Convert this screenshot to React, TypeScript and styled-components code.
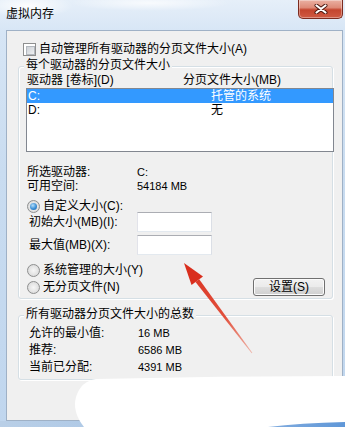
import React from "react";
import styled, { createGlobalStyle } from "styled-components";

const GlobalStyle = createGlobalStyle`
  html, body {
    margin: 0;
    padding: 0;
    background: #fff;
  }
  body {
    font-family: "Liberation Sans", "Noto Sans CJK SC", sans-serif;
    font-size: 12px;
    color: #000;
  }
  * {
    box-sizing: border-box;
  }
`;

const Window = styled.div`
  position: relative;
  width: 345px;
  height: 427px;
  overflow: hidden;
  display: flex;
  flex-direction: column;
  background:
    linear-gradient(90deg, #b9cfe7 0%, #a9c6e6 45%, #7eaade 80%, #5f97d8 100%) bottom / 100% 6px no-repeat,
    radial-gradient(ellipse 45px 12px at 28px 6px, rgba(255, 255, 255, 0.95), transparent),
    radial-gradient(ellipse 80px 8px at 150px 3px, rgba(255, 255, 255, 0.75), transparent),
    linear-gradient(180deg, #e6eff9 0%, #d6e5f5 8%, #c9dcf0 40%, #c0d6ee 100%);
`;

const TitleBar = styled.div`
  flex: none;
  height: 30px;
  display: flex;
  justify-content: space-between;
  align-items: flex-start;
`;

const Title = styled.div`
  padding: 7px 0 0 6px;
  line-height: 14px;
`;

const CloseButton = styled.div`
  width: 45px;
  height: 19px;
  margin-right: 2px;
  border: 1px solid #7c2b1f;
  border-top: none;
  border-radius: 0 0 5px 5px;
  background: linear-gradient(180deg, #eab1a3 0%, #de8b78 42%, #c4452e 55%, #cf5a43 100%);
  box-shadow: inset 0 0 0 1px rgba(255, 255, 255, 0.35);
  display: flex;
  align-items: center;
  justify-content: center;
`;

const Client = styled.div`
  flex: none;
  height: 391px;
  margin: 0 2px 0 6px;
  background: #f0f0f0;
  border: 1px solid #9fb1c6;
  display: flex;
  flex-direction: column;
`;

const CheckRow = styled.div`
  display: flex;
  align-items: center;
  gap: 3px;
  height: 14px;
  margin: 11px 0 0 16px;
  line-height: 14px;
`;

const CheckBox = styled.span`
  flex: none;
  width: 13px;
  height: 13px;
  padding: 2px;
  border: 1px solid #8e8f8f;
  background: #fff;
  &::after {
    content: "";
    display: block;
    width: 100%;
    height: 100%;
    border: 1px solid #b3b8be;
    background: linear-gradient(135deg, #cdd1d6 0%, #eef0f2 100%);
  }
`;

const Group = styled.div<{ $top: number; $bottom: number }>`
  margin: ${(p) => p.$top}px 9px 0 11px;
  padding-bottom: ${(p) => p.$bottom}px;
  border: 1px solid #d5dfe5;
  border-radius: 3px;
  box-shadow: inset 1px 1px 0 #fff, 1px 1px 0 #fff;
  display: flex;
  flex-direction: column;
`;

const Legend = styled.div`
  align-self: flex-start;
  margin: -9px 0 0 5px;
  padding: 0 2px;
  background: #f0f0f0;
  line-height: 14px;
`;

const ColumnHeader = styled.div`
  display: grid;
  grid-template-columns: 156px 1fr;
  margin-top: 1px;
  padding-left: 8px;
  line-height: 14px;
`;

const ListBox = styled.div`
  height: 64px;
  margin: 1px -2px 0 7px;
  border: 1px solid #828790;
  background: #fff;
`;

const ListRow = styled.div<{ $selected?: boolean }>`
  display: grid;
  grid-template-columns: 183px 1fr;
  height: 14px;
  padding-left: 1px;
  line-height: 14px;
  color: ${(p) => (p.$selected ? "#fff" : "#000")};
  background: ${(p) => (p.$selected ? "#3399ff" : "transparent")};
`;

const InfoBlock = styled.div<{ $top: number }>`
  margin-top: ${(p) => p.$top}px;
`;

const InfoRow = styled.div<{ $label: number; $indent: number; $height: number }>`
  display: grid;
  grid-template-columns: ${(p) => p.$label}px 1fr;
  padding-left: ${(p) => p.$indent}px;
  line-height: ${(p) => p.$height}px;
  white-space: nowrap;
`;

const Value = styled.span`
  font-size: 11px;
`;

const RadioRow = styled.div<{ $top: number }>`
  display: flex;
  align-items: center;
  gap: 3px;
  height: 14px;
  margin-top: ${(p) => p.$top}px;
  padding-left: 8px;
  line-height: 14px;
`;

const Radio = styled.span<{ $checked?: boolean }>`
  flex: none;
  width: 13px;
  height: 13px;
  border-radius: 50%;
  border: 1px solid #8e8f8f;
  background: radial-gradient(circle at 50% 50%, #f6f6f6 0%, #e2e2e2 60%, #c9c9c9 100%);
  display: flex;
  align-items: center;
  justify-content: center;
  &::after {
    content: "";
    display: ${(p) => (p.$checked ? "block" : "none")};
    width: 7px;
    height: 7px;
    border-radius: 50%;
    background: radial-gradient(circle at 40% 35%, #b4defa 0%, #3b8fd6 55%, #1d5d9e 100%);
  }
`;

const FieldRow = styled.div<{ $top: number }>`
  display: grid;
  grid-template-columns: 108px 75px;
  align-items: center;
  height: 20px;
  margin-top: ${(p) => p.$top}px;
  padding-left: 10px;
  line-height: 14px;
`;

const TextBox = styled.input`
  width: 75px;
  height: 20px;
  margin: 0;
  padding: 0 2px;
  background: #fff;
  border: 1px solid;
  border-color: #abadb3 #dbdfe6 #e3e9ef #e2e3ea;
  outline: none;
  font: inherit;
`;

const ButtonRow = styled.div`
  display: flex;
  align-items: center;
  justify-content: space-between;
  height: 18px;
  margin-top: 1px;
  padding: 0 7px 0 8px;
`;

const RadioLabel = styled.label`
  display: flex;
  align-items: center;
  gap: 3px;
  line-height: 14px;
`;

const PushButton = styled.button`
  width: 72px;
  height: 18px;
  padding: 0;
  border: 1px solid #707070;
  border-radius: 3px;
  background: linear-gradient(180deg, #f2f2f2 0%, #ebebeb 48%, #dddddd 52%, #cfcfcf 100%);
  box-shadow: inset 0 0 0 1px #fbfbfb;
  font: inherit;
  line-height: 16px;
  color: #000;
`;

const Overlay = styled.svg`
  position: absolute;
  left: 0;
  top: 0;
  pointer-events: none;
`;

const drives = [
  { name: "C:", size: "托管的系统", selected: true },
  { name: "D:", size: "无", selected: false },
];

const totals = [
  { label: "允许的最小值:", value: "16 MB" },
  { label: "推荐:", value: "6586 MB" },
  { label: "当前已分配:", value: "4391 MB" },
];

export default function App() {
  return (
    <>
      <GlobalStyle />
      <Window>
        <TitleBar>
          <Title>虚拟内存</Title>
          <CloseButton>
            <svg width="14" height="10" viewBox="0 0 14 10">
              <path d="M2.5 1.5 L11.5 8.5 M11.5 1.5 L2.5 8.5" stroke="#4a150d" strokeWidth="4" strokeLinecap="round" />
              <path d="M2.5 1.5 L11.5 8.5 M11.5 1.5 L2.5 8.5" stroke="#fff" strokeWidth="2.2" strokeLinecap="round" />
            </svg>
          </CloseButton>
        </TitleBar>

        <Client>
          <CheckRow>
            <CheckBox />
            <span>自动管理所有驱动器的分页文件大小(A)</span>
          </CheckRow>

          <Group $top={10} $bottom={2}>
            <Legend>每个驱动器的分页文件大小</Legend>
            <ColumnHeader>
              <span>驱动器 [卷标](D)</span>
              <span>分页文件大小(MB)</span>
            </ColumnHeader>
            <ListBox>
              {drives.map((d) => (
                <ListRow key={d.name} $selected={d.selected}>
                  <span>{d.name}</span>
                  <span>{d.size}</span>
                </ListRow>
              ))}
            </ListBox>

            <InfoBlock $top={13}>
              <InfoRow $label={110} $indent={8} $height={14}>
                <span>所选驱动器:</span>
                <Value>C:</Value>
              </InfoRow>
              <InfoRow $label={110} $indent={8} $height={14}>
                <span>可用空间:</span>
                <Value>54184 MB</Value>
              </InfoRow>
            </InfoBlock>

            <RadioRow $top={6}>
              <Radio $checked />
              <span>自定义大小(C):</span>
            </RadioRow>
            <FieldRow $top={-1}>
              <span>初始大小(MB)(I):</span>
              <TextBox readOnly />
            </FieldRow>
            <FieldRow $top={3}>
              <span>最大值(MB)(X):</span>
              <TextBox readOnly />
            </FieldRow>

            <RadioRow $top={8}>
              <Radio />
              <span>系统管理的大小(Y)</span>
            </RadioRow>
            <ButtonRow>
              <RadioLabel>
                <Radio />
                <span>无分页文件(N)</span>
              </RadioLabel>
              <PushButton>设置(S)</PushButton>
            </ButtonRow>
          </Group>

          <Group $top={16} $bottom={3}>
            <Legend>所有驱动器分页文件大小的总数</Legend>
            <InfoBlock $top={4}>
              {totals.map((t) => (
                <InfoRow key={t.label} $label={109} $indent={10} $height={17}>
                  <span>{t.label}</span>
                  <Value>{t.value}</Value>
                </InfoRow>
              ))}
            </InfoBlock>
          </Group>
        </Client>

        <Overlay width="345" height="427" viewBox="0 0 345 427">
          <defs>
            <linearGradient id="arrowFade" x1="184" y1="263" x2="252" y2="353" gradientUnits="userSpaceOnUse">
              <stop offset="0" stopColor="#d9301f" />
              <stop offset="0.6" stopColor="#e2503c" />
              <stop offset="1" stopColor="#eeb4a8" />
            </linearGradient>
          </defs>
          <path
            d="M96 379 Q 220 376 345 376 L 345 422 Q 300 423 268 427 L 84 427 Q 72 412 76 397 Q 81 381 96 379 Z"
            fill="#fff"
          />
          <polygon points="199.2,279.2 195.5,282.0 251.7,353.3 252.3,352.7" fill="url(#arrowFade)" />
          <polygon points="184,263 203,276.5 191.5,285" fill="#d92e1d" />
        </Overlay>
      </Window>
    </>
  );
}
